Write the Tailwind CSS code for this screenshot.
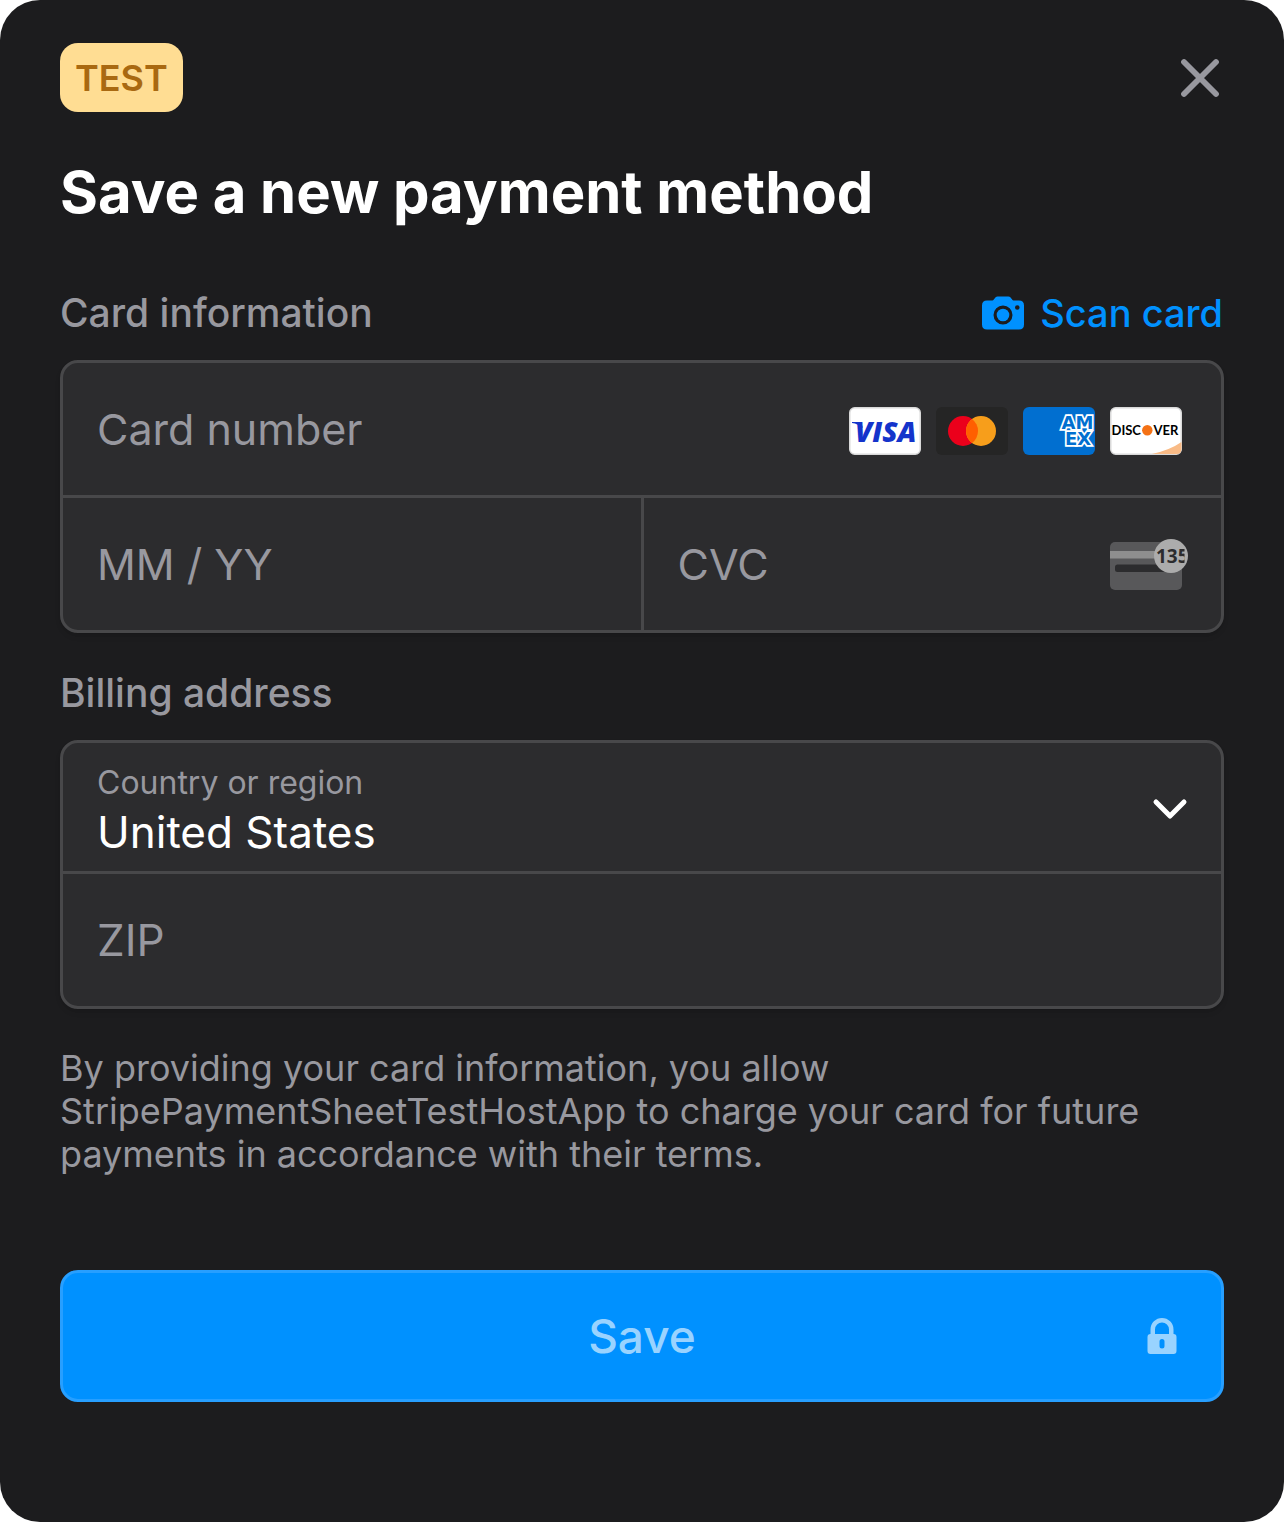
<!DOCTYPE html>
<html lang="en">
<head>
<meta charset="utf-8">
<meta name="viewport" content="width=device-width, initial-scale=1">
<title>Save a new payment method</title>
<script src="https://cdn.jsdelivr.net/npm/@tailwindcss/browser@4"></script>
</head>
<body class="bg-white font-['Inter',sans-serif]">
<main class="min-h-screen rounded-[40px] bg-[#1c1c1e] px-[60px] pt-[43px] pb-[120px]">
  <form>
    <header class="flex items-center justify-between">
      <span class="flex h-[69px] items-center rounded-[18px] bg-[#ffdd93] px-[15px] text-[36px] font-semibold text-[#a96911]">TEST</span>
      <button type="button" aria-label="Close" class="p-1">
        <svg class="size-10" viewBox="0 0 40 40" fill="none" stroke="#98989f" stroke-width="5.800" stroke-linecap="round"><path d="M4 4 36 36M36 4 4 36"/></svg>
      </button>
    </header>

    <h1 class="mt-[44px] text-[58px] leading-[72px] font-bold text-white">Save a new payment method</h1>

    <section>
      <div class="mt-[61px] flex items-center justify-between leading-[48px] font-medium">
        <h2 class="text-[39px] text-[#98989f]">Card information</h2>
        <button type="button" class="flex items-center gap-4 pr-px text-[38px] text-[#0091ff]">
          <svg class="h-[34px] w-[42px]" viewBox="0 0 42 34" fill="currentColor"><path fill-rule="evenodd" d="M5 4.500H10.500C12 4.500 12.500 1 15.500 .5H26.500C29.500 1 30 4.500 31.500 4.500H37Q42 4.500 42 9.500V28.500Q42 33.500 37 33.500H5Q0 33.500 0 28.500V9.500Q0 4.500 5 4.500ZM21 9.500a9.500 9.500 0 1 0 0 19a9.500 9.500 0 1 0 0-19ZM35.300 9.200a2.300 2.300 0 1 0 0 4.600a2.300 2.300 0 1 0 0-4.600Z"/><circle cx="21" cy="19" r="6.300"/></svg>
          Scan card
        </button>
      </div>

      <div class="mt-[23px] overflow-hidden rounded-[18px] border-3 border-[#48484a] bg-[#2c2c2e] text-[43px] shadow-md">
        <div class="flex items-center border-b-3 border-[#48484a] pr-[39px]">
          <input type="text" inputmode="numeric" aria-label="Card number" placeholder="Card number" class="h-[132px] min-w-0 flex-1 bg-transparent pl-[34px] text-white outline-none placeholder:text-[#98989f]">
          <div class="flex shrink-0 gap-[15px] pt-1">
            <svg class="h-[48px] w-[72px]" viewBox="0 0 72 48" role="img" aria-label="Visa"><rect x=".75" y=".75" width="70.500" height="46.500" rx="5" fill="#fff" stroke="#d9d9d9" stroke-width="1.500"/><path d="M3 15H12L14 21Q9 16.800 3 16Z" fill="#1434cb"/><text x="6" y="34.500" font-family="Open Sans" font-style="italic" font-weight="800" font-size="28" fill="#1434cb">VISA</text></svg>
            <svg class="h-[48px] w-[72px]" viewBox="0 0 72 48" role="img" aria-label="Mastercard"><rect width="72" height="48" rx="6" fill="#252525"/><circle cx="27" cy="24" r="15" fill="#eb001b"/><circle cx="45" cy="24" r="15" fill="#f79e1b"/><path d="M36 12a15 15 0 0 1 0 24a15 15 0 0 1 0-24Z" fill="#ff5f00"/></svg>
            <svg class="h-[48px] w-[72px]" viewBox="0 0 72 48" role="img" aria-label="American Express"><clipPath id="amex"><rect width="72" height="48" rx="6"/></clipPath><g clip-path="url(#amex)"><rect width="72" height="48" fill="#016fd0"/><g font-family="DejaVu Sans" font-weight="700" font-size="18" fill="#016fd0" stroke="#fff" stroke-width="3.500" paint-order="stroke"><text x="38.500" y="22">AM</text><text x="42" y="38">EX</text></g></g></svg>
            <svg class="h-[48px] w-[72px]" viewBox="0 0 72 48" role="img" aria-label="Discover"><rect x=".75" y=".75" width="70.500" height="46.500" rx="5" fill="#fff" stroke="#d9d9d9" stroke-width="1.500"/><path d="M42 47Q60 43 71.500 35V42Q71.500 47 66.500 47Z" fill="#f9bb86"/><g font-family="Lato" font-weight="700" font-size="13" fill="#000"><text x="1.500" y="28">DISC</text><text x="43.500" y="28">VER</text></g><circle cx="37.300" cy="23.300" r="5.200" fill="#f47216"/></svg>
          </div>
        </div>
        <div class="grid grid-cols-[1fr_auto_1fr]">
          <input type="text" inputmode="numeric" aria-label="Expiration date" placeholder="MM / YY" class="h-[132px] min-w-0 bg-transparent pl-[34px] text-white outline-none placeholder:text-[#98989f]">
          <div class="w-[3px] bg-[#48484a]"></div>
          <div class="flex min-w-0 items-center pr-[33px]">
            <input type="text" inputmode="numeric" aria-label="CVC" placeholder="CVC" class="h-[132px] min-w-0 flex-1 bg-transparent pl-[34px] text-white outline-none placeholder:text-[#98989f]">
            <svg class="h-[52px] w-[78px] shrink-0" viewBox="0 0 78 52" aria-hidden="true"><clipPath id="digits"><rect x="44" y="4" width="30.500" height="28"/></clipPath><rect y="4" width="72" height="48" rx="5" fill="#58585a"/><path d="M0 13H50V20.500H0Z" fill="#8e8e8e"/><path d="M7.500 26.500H60V34H7.500Q5 34 5 31.500V29Q5 26.500 7.500 26.500Z" fill="#2c2c2e"/><circle cx="61" cy="18" r="17" fill="#acacac"/><g clip-path="url(#digits)"><text x="46" y="25" font-family="Noto Sans" font-weight="700" font-size="19" fill="#2c2c2e">135</text></g></svg>
          </div>
        </div>
      </div>
    </section>

    <section>
      <h2 class="mt-[36px] text-[39px] leading-[48px] font-medium text-[#98989f]">Billing address</h2>
      <div class="mt-[23px] overflow-hidden rounded-[18px] border-3 border-[#48484a] bg-[#2c2c2e] text-[44px] shadow-md">
        <div class="grid h-[131px] border-b-3 border-[#48484a]">
          <label for="country" class="pointer-events-none z-10 col-start-1 row-start-1 self-start pt-5 pl-[34px] text-[32px] leading-[40px] text-[#98989f]">Country or region</label>
          <select id="country" class="col-start-1 row-start-1 w-full appearance-none bg-transparent pt-[50px] pl-[34px] text-white outline-none">
            <option>United States</option>
          </select>
          <svg class="pointer-events-none col-start-1 row-start-1 mt-1 mr-[33px] h-[22px] w-[36px] self-center justify-self-end" viewBox="0 0 36 22" fill="none" stroke="#fff" stroke-width="5" stroke-linecap="round" stroke-linejoin="round"><path d="M4 4 18 18 32 4"/></svg>
        </div>
        <input type="text" aria-label="ZIP" placeholder="ZIP" class="block h-[132px] w-full bg-transparent pl-[34px] text-white outline-none placeholder:text-[#98989f]">
      </div>
    </section>

    <p class="mt-[38px] text-[36px] leading-[43px] text-[#98989f]">By providing your card information, you allow StripePaymentSheetTestHostApp to charge your card for future payments in accordance with their terms.</p>

    <button type="submit" class="mt-[94px] grid h-[132px] w-full grid-cols-[1fr_auto_1fr] items-center rounded-[18px] border-3 border-[#279fff] bg-[#0091ff] px-[44px] text-[46px] font-medium text-[#99d3ff]">
      <span class="col-start-2">Save</span>
      <svg class="h-[36px] w-[30px] justify-self-end" viewBox="0 0 30 36" fill="currentColor" aria-hidden="true"><path fill-rule="evenodd" d="M3.500 16V11.500a11.500 11.500 0 0 1 23 0V16Q29.500 16 29.500 19V33Q29.500 36 26.500 36H3.500Q.5 36 .5 33V19Q.5 16 3.500 16ZM8 16H22V11.500a7 7 0 0 0-14 0ZM15 21a2.500 2.500 0 0 0-2.500 2.500V28a2.500 2.500 0 0 0 5 0V23.500A2.500 2.500 0 0 0 15 21Z"/></svg>
    </button>
  </form>
</main>
</body>
</html>
